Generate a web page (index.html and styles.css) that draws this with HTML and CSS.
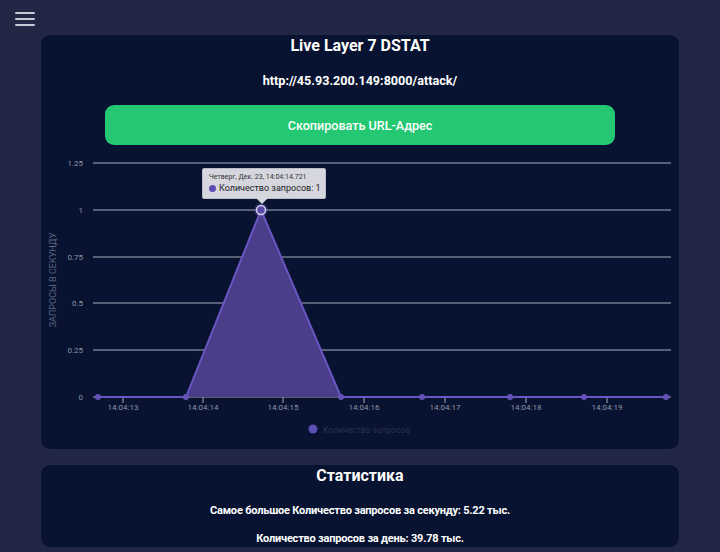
FILE: index.html
```html
<!DOCTYPE html>
<html lang="ru">
<head>
<meta charset="utf-8">
<title>Live Layer 7 DSTAT</title>
<link rel="stylesheet" href="styles.css">
</head>
<body>
<header class="topbar">
  <button class="burger" aria-label="menu"><span></span><span></span><span></span></button>
</header>
<main class="content">
  <section class="card card-chart">
    <h1 class="title">Live Layer 7 DSTAT</h1>
    <p class="url">http://45.93.200.149:8000/attack/</p>
    <button class="copy-btn">Скопировать URL-Адрес</button>
    <div class="chart">
      <svg class="chart-svg" width="638" height="304" viewBox="0 0 638 304">
        <g class="grid">
          <line x1="52" y1="18" x2="630" y2="18"/>
          <line x1="52" y1="65" x2="630" y2="65"/>
          <line x1="52" y1="112" x2="630" y2="112"/>
          <line x1="52" y1="158" x2="630" y2="158"/>
          <line x1="52" y1="205" x2="630" y2="205"/>
          <line x1="52" y1="252" x2="630" y2="252"/>
        </g>
        <g class="ylabels">
          <text x="42" y="21">1.25</text>
          <text x="42" y="68">1</text>
          <text x="42" y="115">0.75</text>
          <text x="42" y="161">0.5</text>
          <text x="42" y="208">0.25</text>
          <text x="42" y="255">0</text>
        </g>
        <g class="ticks">
          <line x1="82" y1="252" x2="82" y2="258"/>
          <line x1="162" y1="252" x2="162" y2="258"/>
          <line x1="242" y1="252" x2="242" y2="258"/>
          <line x1="323" y1="252" x2="323" y2="258"/>
          <line x1="404" y1="252" x2="404" y2="258"/>
          <line x1="485" y1="252" x2="485" y2="258"/>
          <line x1="566" y1="252" x2="566" y2="258"/>
        </g>
        <g class="xlabels">
          <text x="82" y="265">14:04:13</text>
          <text x="162" y="265">14:04:14</text>
          <text x="242" y="265">14:04:15</text>
          <text x="323" y="265">14:04:16</text>
          <text x="404" y="265">14:04:17</text>
          <text x="485" y="265">14:04:18</text>
          <text x="566" y="265">14:04:19</text>
        </g>
        <text class="ytitle" x="15" y="135" transform="rotate(-90 15 135)">ЗАПРОСЫ В СЕКУНДУ</text>
        <polygon class="area" points="57,252 145,252 220,65 300,252 381,252 469,252 543,252 625,252"/>
        <polyline class="series" points="57,252 145,252 220,65 300,252 381,252 469,252 543,252 625,252"/>
        <g class="dots">
          <circle cx="57" cy="252" r="3"/>
          <circle cx="145" cy="252" r="3"/>
          <circle cx="300" cy="252" r="3"/>
          <circle cx="381" cy="252" r="3"/>
          <circle cx="469" cy="252" r="3"/>
          <circle cx="543" cy="252" r="3"/>
          <circle cx="625" cy="252" r="3"/>
        </g>
        <circle class="dot-halo" cx="220" cy="65" r="7"/>
        <circle class="dot-active" cx="220" cy="65" r="4.5"/>
        <circle class="legend-dot" cx="272" cy="284" r="4.5"/>
        <text class="legend-text" x="282" y="287.5">Количество запросов</text>
      </svg>
      <div class="tooltip">
        <div class="tt-date">Четверг, Дек. 23, 14:04:14.721</div>
        <div class="tt-row"><span class="tt-dot"></span>Количество запросов: 1</div>
      </div>
    </div>
  </section>
  <section class="card card-stats">
    <h2 class="title">Статистика</h2>
    <p class="stat">Самое большое Количество запросов за секунду: 5.22 тыс.</p>
    <p class="stat">Количество запросов за день: 39.78 тыс.</p>
  </section>
</main>
</body>
</html>
```

FILE: styles.css
```css
* { box-sizing: border-box; }
html, body {
  margin: 0;
  padding: 0;
  background: #222745;
  font-family: Roboto, "Noto Sans", "Liberation Sans", sans-serif;
  color: #ffffff;
  overflow: hidden;
}
body { width: 720px; height: 552px; }

.topbar {
  height: 35px;
  padding: 12px 0 0 15px;
}
.burger {
  display: flex;
  flex-direction: column;
  gap: 4px;
  width: 20px;
  padding: 0;
  border: 0;
  background: none;
}
.burger span {
  display: block;
  width: 20px;
  height: 2px;
  background: #c8cad8;
  border-radius: 1px;
}

.content {
  display: flex;
  flex-direction: column;
  gap: 16px;
  padding: 0 41px;
}

.card {
  background: #071330;
  border-radius: 9px;
  display: flex;
  flex-direction: column;
  align-items: center;
}
.card-chart { height: 414px; }
.card-stats { height: 82px; }

.title {
  margin: 0;
  font-size: 16px;
  font-weight: 700;
  line-height: 22px;
  text-align: center;
}
.url {
  margin: 16px 0 0;
  font-size: 12.6px;
  font-weight: 700;
  line-height: 16px;
}
.copy-btn {
  margin-top: 16px;
  width: 510px;
  height: 40px;
  border: 0;
  border-radius: 9px;
  background: #24c872;
  color: #ffffff;
  font-family: inherit;
  font-size: 12.6px;
  font-weight: 500;
}

.chart {
  position: relative;
  width: 638px;
  height: 304px;
}
.chart-svg { display: block; }
.grid line { stroke: #a9adbd; stroke-width: 1; }
.ticks line { stroke: #a9adbd; stroke-width: 1; }
.ylabels text {
  fill: #9095a8;
  font-size: 8px;
  text-anchor: end;
  font-family: Roboto, sans-serif;
}
.xlabels text {
  fill: #9095a8;
  font-size: 8px;
  text-anchor: middle;
  font-family: Roboto, sans-serif;
}
.ytitle {
  fill: #5f6584;
  font-size: 9px;
  text-anchor: middle;
  font-family: Roboto, sans-serif;
}
.area { fill: #4a3d8a; }
.series { fill: none; stroke: #6a55c2; stroke-width: 2; stroke-linejoin: round; }
.dots circle { fill: #6552b8; }
.dot-halo { fill: rgba(101, 82, 184, 0.35); }
.dot-active { fill: #5a48a8; stroke: #d8d4f0; stroke-width: 1.5; }
.legend-dot { fill: #5d4db5; }
.legend-text {
  fill: #2b3150;
  font-size: 8.5px;
  font-family: Roboto, sans-serif;
}

.tooltip {
  position: absolute;
  left: 161px;
  top: 23px;
  width: 124px;
  height: 31px;
  padding: 4px 0 0 6px;
  background: #d6d7de;
  border: 1px solid #b8bac6;
  border-radius: 2px;
  color: #222;
}
.tooltip::after {
  content: "";
  position: absolute;
  left: 53px;
  bottom: -6px;
  border-left: 6px solid transparent;
  border-right: 6px solid transparent;
  border-top: 6px solid #d6d7de;
}
.tt-date {
  font-size: 7px;
  line-height: 9px;
  color: #333;
}
.tt-row {
  display: flex;
  align-items: center;
  gap: 3px;
  font-size: 9px;
  line-height: 12px;
  color: #222;
}
.tt-dot {
  width: 7px;
  height: 7px;
  border-radius: 50%;
  background: #5d4db5;
}

.stat {
  margin: 0;
  font-size: 11px;
  font-weight: 700;
  letter-spacing: -0.2px;
  line-height: 12px;
}
.card-stats .stat:first-of-type { margin-top: 18px; }
.card-stats .stat + .stat { margin-top: 16px; }
```
